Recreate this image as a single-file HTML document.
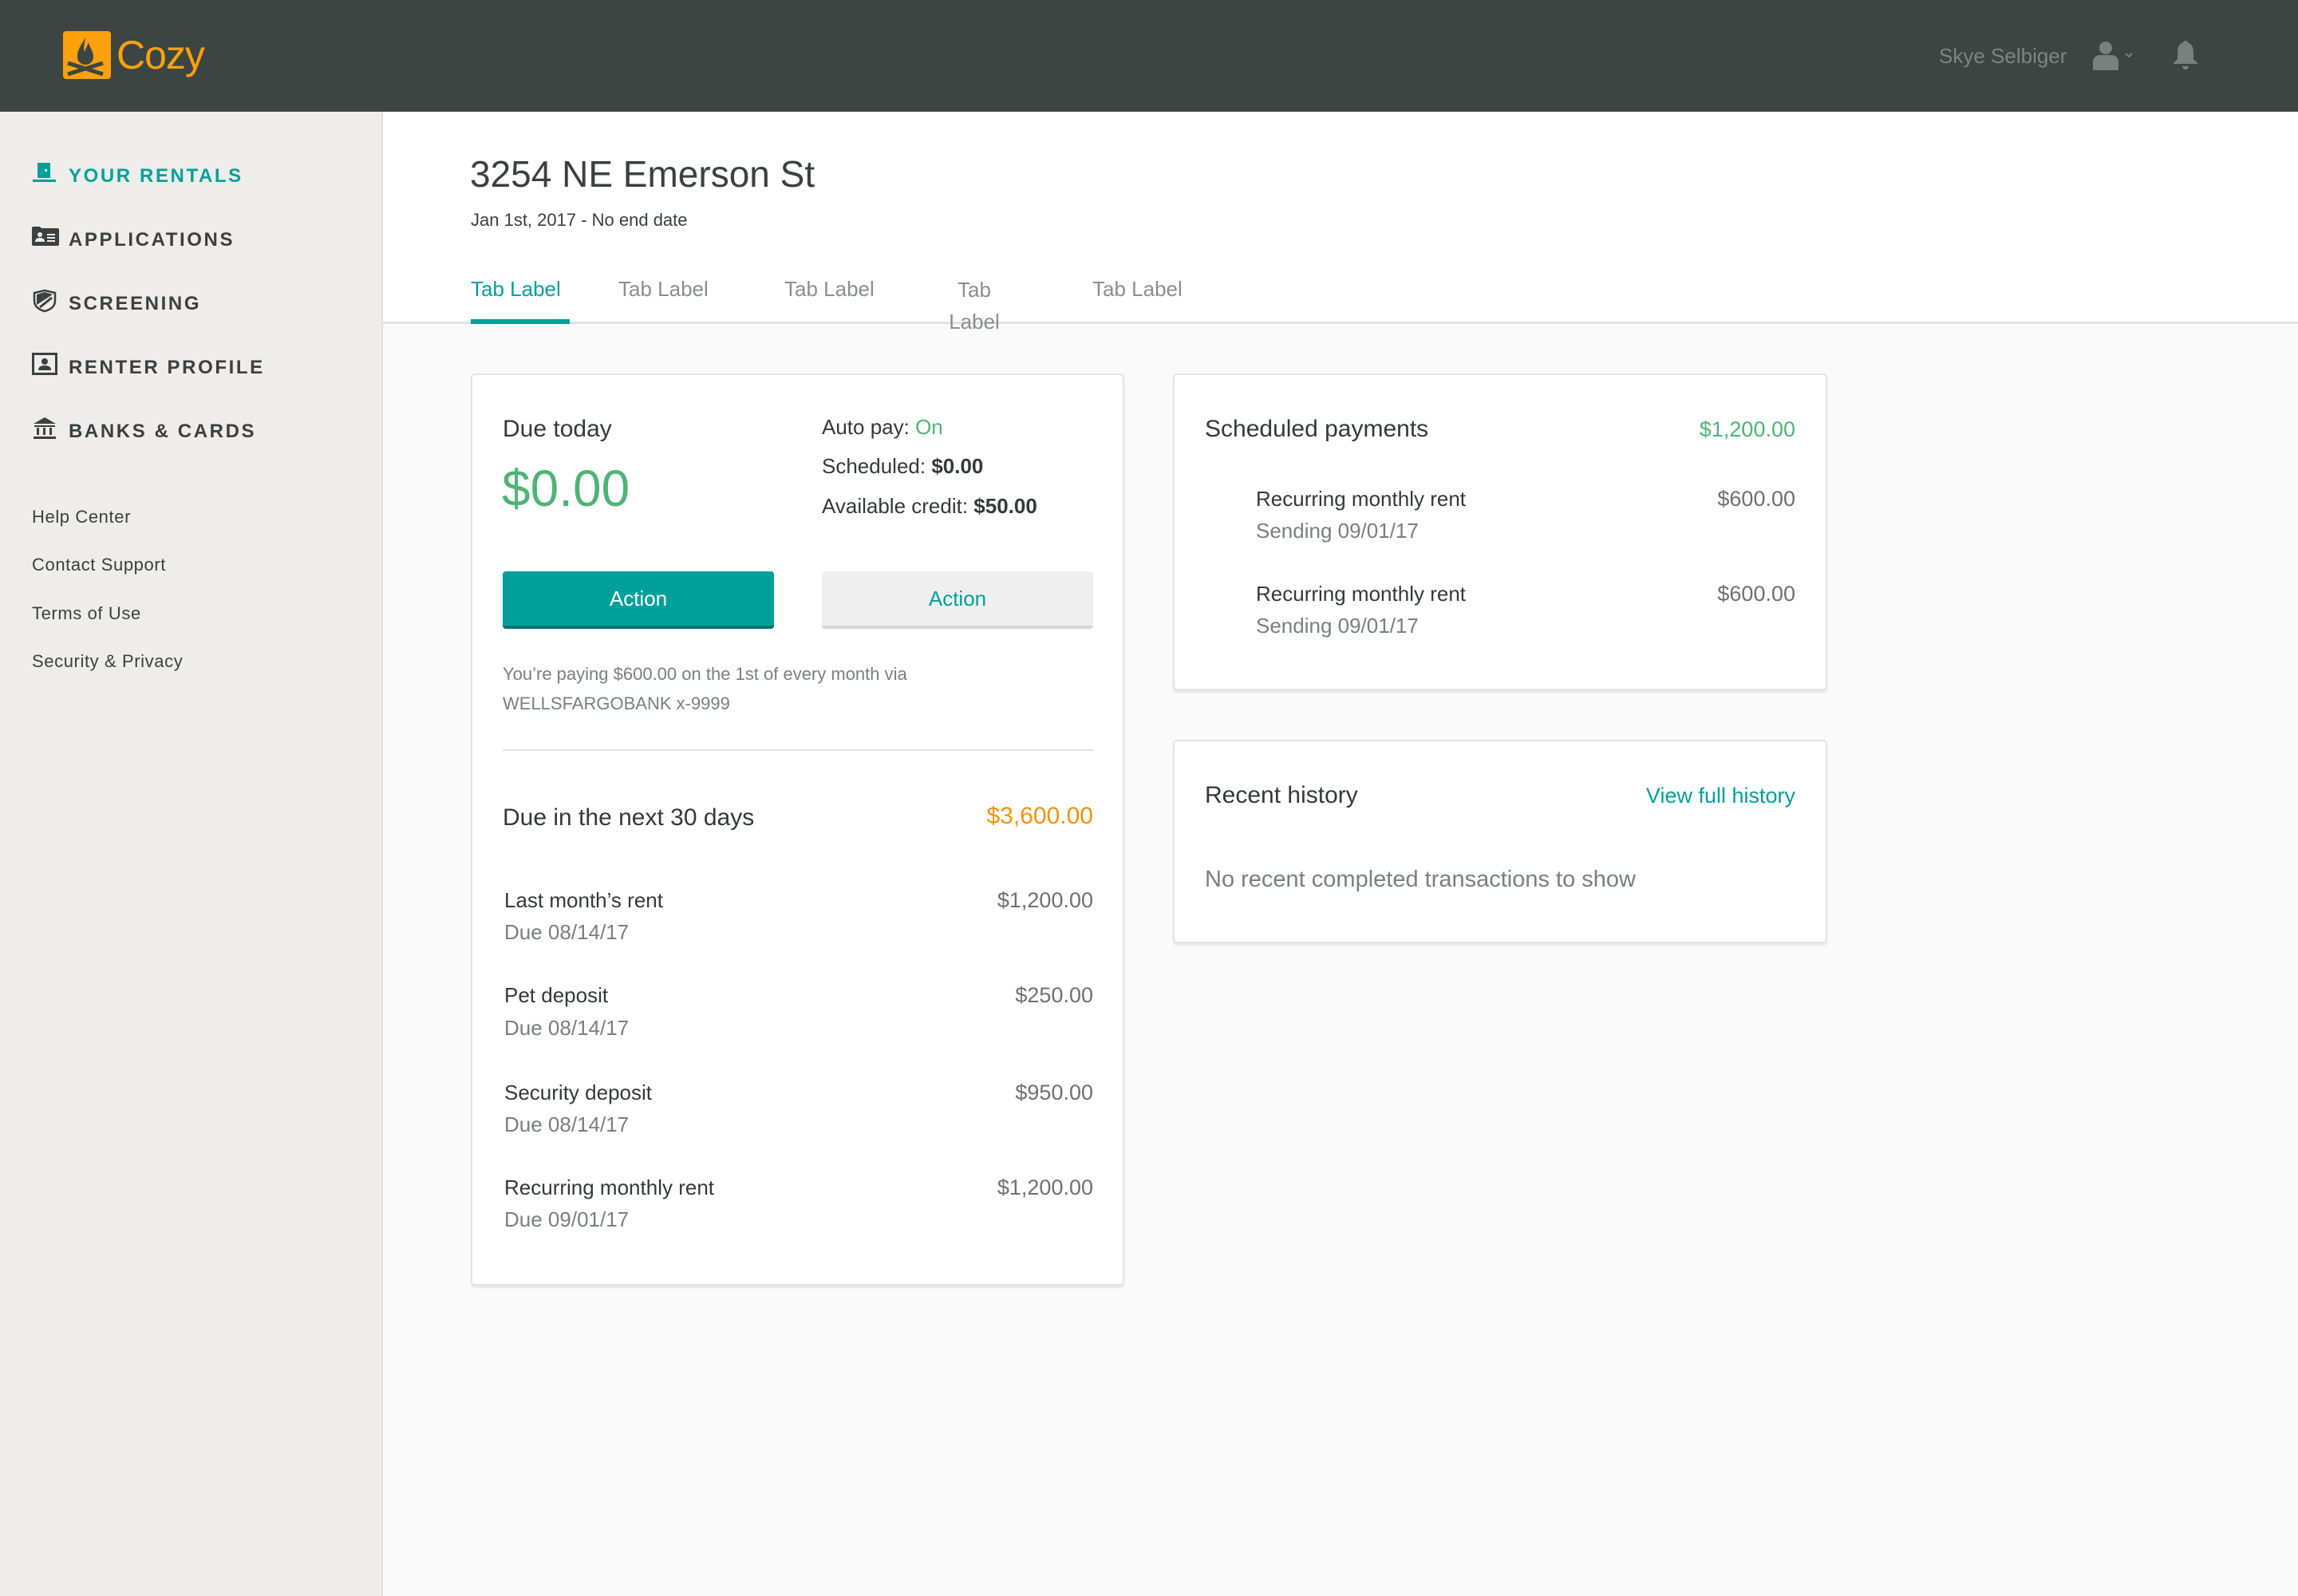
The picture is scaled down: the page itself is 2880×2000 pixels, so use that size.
<!DOCTYPE html>
<html><head><meta charset="utf-8"><style>
*{margin:0;padding:0;box-sizing:border-box}
body{width:2880px;height:2000px;position:relative;overflow:hidden;font-family:"Liberation Sans",sans-serif;background:#fafafa;color:#3a4140}
.a{position:absolute;white-space:nowrap}
#hdr{left:0;top:0;width:2880px;height:140px;background:#3d4543}
#side{left:0;top:140px;width:480px;height:1860px;background:#eeede9;border-right:2px solid #e2e1dd}
#top{left:480px;top:140px;width:2400px;height:266px;background:#fff;border-bottom:3px solid #e3e3e3}
.nav{left:86px;font-size:24px;letter-spacing:2.6px;font-weight:bold;color:#3a4140;line-height:30px}
.ic{left:40px}
.lnk{left:40px;font-size:22px;color:#3a4140;line-height:28px;letter-spacing:.6px}
.tab{font-size:26px;color:#8a8f8e;line-height:30px}
.card{background:#fff;border:2px solid #e4e4e4;border-radius:5px;box-shadow:0 3px 2px rgba(0,0,0,.08)}
.h{font-size:30px;color:#333a39;line-height:36px}
.t{font-size:26px;color:#333a39;line-height:32px}
.s{font-size:26px;color:#7b7f7e;line-height:32px}
.r{text-align:right}
.amt{font-size:27px;color:#6b7270;line-height:32px}
</style></head><body>
<div class="a" id="hdr"></div>
<svg class="a" style="left:79px;top:37px" width="60" height="64" viewBox="0 0 60 64"><rect x="0" y="2" width="60" height="60" rx="4" fill="#ffa10a"/><path d="M28 10c-4 8-10 14-10 24 0 6 4 10 10 10s10-4 10-10c0-7-5-12-6-18-2 6-4 8-5 12-2-4 0-10 1-18z" fill="#3d4543"/><path d="M6 42l44 14M6 56l44-14" stroke="#3d4543" stroke-width="5"/></svg>
<div class="a" style="left:146px;top:38px;font-size:50px;color:#ffa10a;line-height:62px;letter-spacing:-1px">Cozy</div>
<div class="a" style="left:2430px;top:54px;font-size:26px;color:#7a8580;line-height:32px">Skye Selbiger</div>
<svg class="a" style="left:2623px;top:50px" width="56" height="40" viewBox="0 0 56 40"><circle cx="16" cy="10" r="8" fill="#77817d"/><path d="M0 38v-10c0-6 4-9 9-9h14c5 0 9 3 9 9v10z" fill="#77817d"/><path d="M41 17l4 4 4-4" stroke="#77817d" stroke-width="2" fill="none"/></svg>
<svg class="a" style="left:2722px;top:50px" width="34" height="38" viewBox="0 0 34 38"><circle cx="17" cy="4" r="3" fill="#77817d"/><path d="M17 3c-7 0-10 6-10 12v9l-6 6h32l-6-6v-9c0-6-3-12-10-12z" fill="#77817d"/><path d="M13 33h8c0 3-2 4-4 4s-4-1-4-4z" fill="#77817d"/></svg>

<div class="a" id="side"></div>
<svg class="a ic" style="top:203px" width="32" height="30" viewBox="0 0 32 30"><rect x="7" y="1" width="16" height="19" fill="#00a09a"/><rect x="16" y="9" width="3" height="3" fill="#eeede9"/><rect x="1" y="22" width="29" height="3" fill="#00a09a"/></svg>
<div class="a nav" style="top:206px;color:#00a09a">YOUR RENTALS</div>
<svg class="a ic" style="top:283px" width="34" height="28" viewBox="0 0 34 28"><path d="M0 3q0-2 2-2h8l2 2h20q2 0 2 2v18q0 2-2 2H2q-2 0-2-2z" fill="#3a4140"/><circle cx="10" cy="11" r="3" fill="#eeede9"/><path d="M4 20q0-5 6-5t6 5z" fill="#eeede9"/><path d="M19 11h10M19 15h10M19 19h10" stroke="#eeede9" stroke-width="2"/></svg>
<div class="a nav" style="top:286px">APPLICATIONS</div>
<svg class="a ic" style="top:362px" width="32" height="30" viewBox="0 0 32 30"><path d="M16 2l13 3v10c0 7-6 11-13 13C9 26 3 22 3 15V5z" fill="none" stroke="#3a4140" stroke-width="2.5"/><path d="M6 7l10-3 10 3-20 13z" fill="#3a4140"/><path d="M25 11l-15 12" stroke="#3a4140" stroke-width="3"/></svg>
<div class="a nav" style="top:366px">SCREENING</div>
<svg class="a ic" style="top:442px" width="34" height="30" viewBox="0 0 34 30"><rect x="1.5" y="1.5" width="29" height="25" fill="none" stroke="#3a4140" stroke-width="3"/><circle cx="16" cy="11" r="4" fill="#3a4140"/><path d="M8 22q0-6 8-6t8 6z" fill="#3a4140"/></svg>
<div class="a nav" style="top:446px">RENTER PROFILE</div>
<svg class="a ic" style="top:522px" width="32" height="30" viewBox="0 0 32 30"><path d="M16 1l14 8H2z" fill="#3a4140"/><rect x="3" y="11" width="26" height="2" fill="#3a4140"/><rect x="6" y="14" width="3" height="9" fill="#3a4140"/><rect x="14" y="14" width="3" height="9" fill="#3a4140"/><rect x="22" y="14" width="3" height="9" fill="#3a4140"/><rect x="2" y="25" width="28" height="3" fill="#3a4140"/></svg>
<div class="a nav" style="top:526px">BANKS &amp; CARDS</div>
<div class="a lnk" style="top:634px">Help Center</div>
<div class="a lnk" style="top:694px">Contact Support</div>
<div class="a lnk" style="top:755px">Terms of Use</div>
<div class="a lnk" style="top:815px">Security &amp; Privacy</div>

<div class="a" id="top"></div>
<div class="a" style="left:589px;top:190px;font-size:46px;color:#3a4140;line-height:56px">3254 NE Emerson St</div>
<div class="a" style="left:590px;top:262px;font-size:22px;color:#3a4140;line-height:28px">Jan 1st, 2017 - No end date</div>
<div class="a tab" style="left:590px;top:347px;color:#00a09a">Tab Label</div>
<div class="a" style="left:590px;top:400px;width:124px;height:6px;background:#00a09a"></div>
<div class="a tab" style="left:775px;top:347px">Tab Label</div>
<div class="a tab" style="left:983px;top:347px">Tab Label</div>
<div class="a tab" style="left:1186px;top:343px;text-align:center;width:70px;line-height:40px;white-space:normal">Tab Label</div>
<div class="a tab" style="left:1369px;top:347px">Tab Label</div>

<div class="a card" style="left:590px;top:468px;width:819px;height:1143px"></div>
<div class="a h" style="left:630px;top:520px">Due today</div>
<div class="a" style="left:629px;top:574px;font-size:64px;color:#4fb376;line-height:76px">$0.00</div>
<div class="a t" style="left:1030px;top:519px">Auto pay: <span style="color:#4fb376">On</span></div>
<div class="a t" style="left:1030px;top:568px">Scheduled: <b>$0.00</b></div>
<div class="a t" style="left:1030px;top:618px">Available credit: <b>$50.00</b></div>
<div class="a" style="left:630px;top:716px;width:340px;height:72px;background:#00a09a;border-bottom:4px solid #007470;border-radius:4px;color:#fff;font-size:26px;text-align:center;line-height:68px">Action</div>
<div class="a" style="left:1030px;top:716px;width:340px;height:72px;background:#efefef;border-bottom:4px solid #d6d6d6;border-radius:4px;color:#00a09a;font-size:26px;text-align:center;line-height:68px">Action</div>
<div class="a" style="left:630px;top:826px;font-size:22px;color:#7b7f7e;line-height:37px">You’re paying $600.00 on the 1st of every month via<br>WELLSFARGOBANK x-9999</div>
<div class="a" style="left:630px;top:939px;width:740px;height:2px;background:#e4e4e4"></div>
<div class="a h" style="left:630px;top:1007px">Due in the next 30 days</div>
<div class="a h r" style="left:1070px;width:300px;top:1005px;color:#f59300">$3,600.00</div>
<div class="a t" style="left:632px;top:1112px">Last month’s rent</div><div class="a s" style="left:632px;top:1152px">Due 08/14/17</div><div class="a amt r" style="left:1070px;width:300px;top:1112px">$1,200.00</div>
<div class="a t" style="left:632px;top:1231px">Pet deposit</div><div class="a s" style="left:632px;top:1272px">Due 08/14/17</div><div class="a amt r" style="left:1070px;width:300px;top:1231px">$250.00</div>
<div class="a t" style="left:632px;top:1353px">Security deposit</div><div class="a s" style="left:632px;top:1393px">Due 08/14/17</div><div class="a amt r" style="left:1070px;width:300px;top:1353px">$950.00</div>
<div class="a t" style="left:632px;top:1472px">Recurring monthly rent</div><div class="a s" style="left:632px;top:1512px">Due 09/01/17</div><div class="a amt r" style="left:1070px;width:300px;top:1472px">$1,200.00</div>

<div class="a card" style="left:1470px;top:468px;width:820px;height:397px"></div>
<div class="a h" style="left:1510px;top:520px">Scheduled payments</div>
<div class="a amt r" style="left:1950px;width:300px;top:522px;color:#4fb376">$1,200.00</div>
<div class="a t" style="left:1574px;top:609px">Recurring monthly rent</div><div class="a s" style="left:1574px;top:649px">Sending 09/01/17</div><div class="a amt r" style="left:1950px;width:300px;top:609px">$600.00</div>
<div class="a t" style="left:1574px;top:728px">Recurring monthly rent</div><div class="a s" style="left:1574px;top:768px">Sending 09/01/17</div><div class="a amt r" style="left:1950px;width:300px;top:728px">$600.00</div>

<div class="a card" style="left:1470px;top:927px;width:820px;height:255px"></div>
<div class="a h" style="left:1510px;top:979px">Recent history</div>
<div class="a r" style="left:1850px;width:400px;top:981px;font-size:27px;color:#00a09a;line-height:32px">View full history</div>
<div class="a" style="left:1510px;top:1085px;font-size:29px;color:#7b7f7e;line-height:34px">No recent completed transactions to show</div>
</body></html>
